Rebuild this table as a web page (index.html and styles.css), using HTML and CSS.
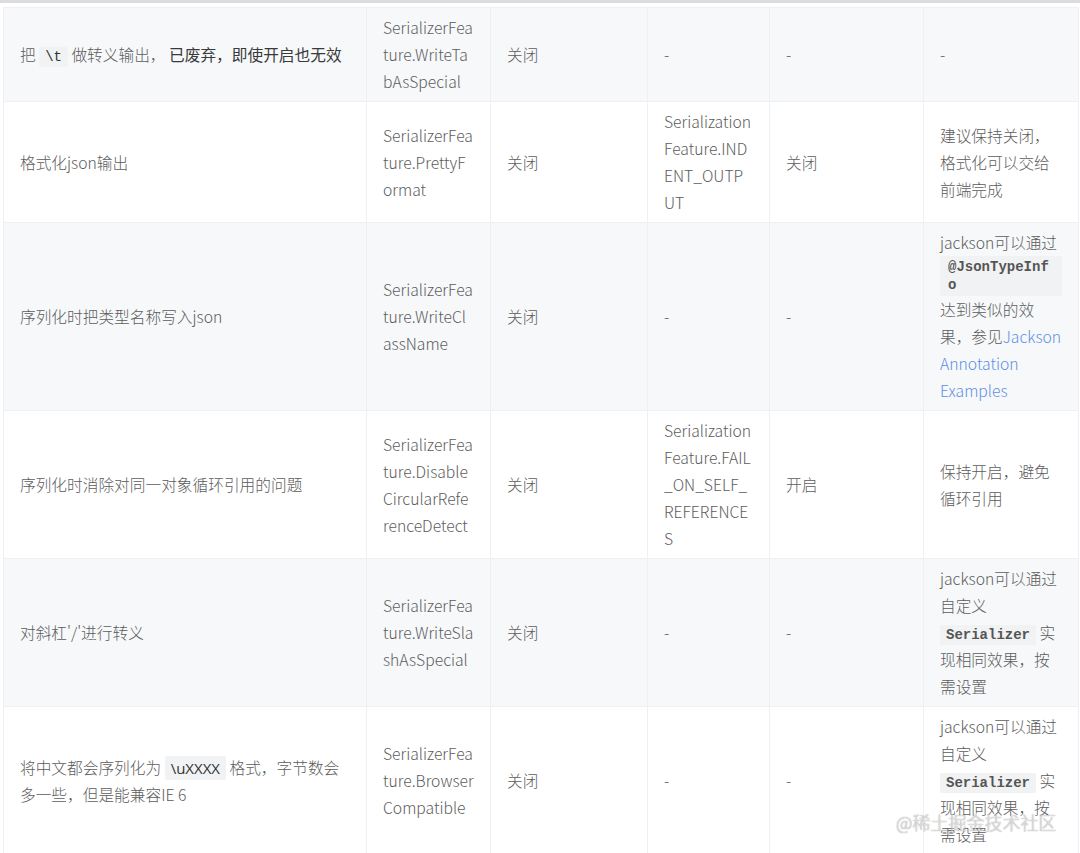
FILE: index.html
```html
<!DOCTYPE html>
<html lang="zh-CN">
<head>
<meta charset="utf-8">
<title>SerializerFeature</title>
<link rel="stylesheet" href="styles.css">
</head>
<body>
<div class="topbar"></div>
<div class="wrap">
<table class="feat">
<colgroup>
<col class="c1"><col class="c2"><col class="c3"><col class="c4"><col class="c5"><col class="c6">
</colgroup>
<tbody>
<tr class="alt">
<td>把 <code class="code code-thin">\t</code> 做转义输出， <span class="dark">已废弃，即使开启也无效</span></td>
<td>SerializerFeature.WriteTabAsSpecial</td>
<td>关闭</td>
<td>-</td>
<td>-</td>
<td>-</td>
</tr>
<tr>
<td>格式化json输出</td>
<td>SerializerFeature.PrettyFormat</td>
<td>关闭</td>
<td>SerializationFeature.INDENT_OUTPUT</td>
<td>关闭</td>
<td>建议保持关闭，格式化可以交给前端完成</td>
</tr>
<tr class="alt">
<td>序列化时把类型名称写入json</td>
<td>SerializerFeature.WriteClassName</td>
<td>关闭</td>
<td>-</td>
<td>-</td>
<td>jackson可以通过 <code class="code code-box">@JsonTypeInfo</code> 达到类似的效果，参见<a class="link" href="#">Jackson Annotation Examples</a></td>
</tr>
<tr>
<td>序列化时消除对同一对象循环引用的问题</td>
<td>SerializerFeature.DisableCircularReferenceDetect</td>
<td>关闭</td>
<td>SerializationFeature.FAIL_ON_SELF_REFERENCES</td>
<td>开启</td>
<td>保持开启，避免循环引用</td>
</tr>
<tr class="alt">
<td>对斜杠'/'进行转义</td>
<td>SerializerFeature.WriteSlashAsSpecial</td>
<td>关闭</td>
<td>-</td>
<td>-</td>
<td>jackson可以通过自定义 <code class="code">Serializer</code> 实现相同效果，按需设置</td>
</tr>
<tr>
<td>将中文都会序列化为 <code class="code code-sans">\uXXXX</code> 格式，字节数会多一些，但是能兼容IE 6</td>
<td>SerializerFeature.BrowserCompatible</td>
<td>关闭</td>
<td>-</td>
<td>-</td>
<td>jackson可以通过自定义 <code class="code">Serializer</code> 实现相同效果，按需设置</td>
</tr>
</tbody>
</table>
<span class="watermark">@稀土掘金技术社区</span>
</div>
</body>
</html>
```

FILE: styles.css
```css
html, body {
  margin: 0;
  padding: 0;
  background: #ffffff;
}

body {
  width: 1080px;
  height: 853px;
  overflow: hidden;
  font-family: "Noto Sans CJK SC", "Noto Sans", sans-serif;
  color: #5c5c5c;
}

.topbar {
  height: 3px;
  background: #dcdcdc;
}

.wrap {
  position: relative;
  padding: 4px 0 0 3px;
}

.feat {
  width: 1075px;
  table-layout: fixed;
  border-collapse: collapse;
  font-size: 15.7px;
  line-height: 27px;
  font-weight: 300;
}

.c1 { width: 363px; }
.c2 { width: 124px; }
.c3 { width: 157px; }
.c4 { width: 122px; }
.c5 { width: 154px; }
.c6 { width: 155px; }

.feat td {
  border: 1px solid #eef0f3;
  padding: 6px 16px;
  vertical-align: middle;
  overflow-wrap: anywhere;
}

.feat tr.alt td {
  background: #f6f8fa;
}

.dark {
  color: #3a3a3a;
  font-weight: 400;
}

.code {
  font-family: "Liberation Mono", "DejaVu Sans Mono", monospace;
  font-size: 14px;
  line-height: 16px;
  font-weight: 700;
  color: #555555;
  background: #f1f2f3;
  padding: 2px 6px;
  border-radius: 2px;
}

.code-thin {
  font-weight: 400;
  color: #333333;
}

.code-box {
  display: inline-block;
  line-height: 18px;
  padding: 2px 8px;
  word-break: break-all;
  vertical-align: middle;
}

.code-sans {
  font-family: "Open Sans", "Noto Sans", sans-serif;
  font-weight: 400;
  color: #333333;
  font-size: 15px;
}

.link {
  color: #5f8fe2;
  text-decoration: none;
}

.watermark {
  position: absolute;
  left: 896px;
  top: 806px;
  font-size: 18px;
  line-height: 26px;
  font-weight: 300;
  color: rgba(255, 255, 255, 0.75);
  text-shadow: 0 0 1px rgba(60, 60, 60, 0.75);
  font-family: "Noto Sans CJK SC", sans-serif;
  white-space: nowrap;
}
```
